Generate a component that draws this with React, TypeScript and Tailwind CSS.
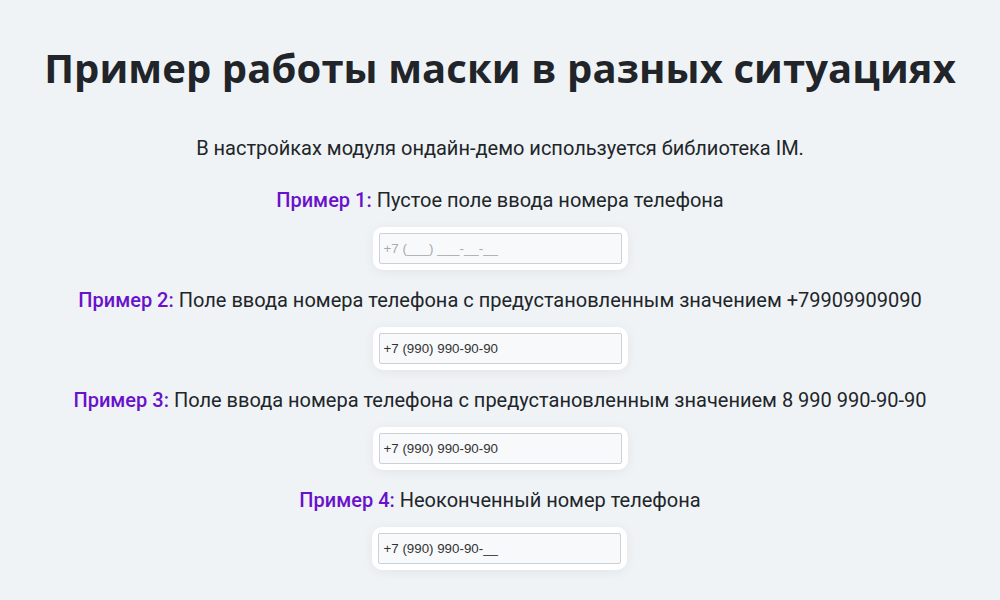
import React from 'react';

const examples = [
  { n: 1, text: 'Пустое поле ввода номера телефона', value: '', placeholder: '+7 (___) ___-__-__' },
  { n: 2, text: 'Поле ввода номера телефона с предустановленным значением +79909909090', value: '+7 (990) 990-90-90' },
  { n: 3, text: 'Поле ввода номера телефона с предустановленным значением 8 990 990-90-90', value: '+7 (990) 990-90-90' },
  { n: 4, text: 'Неоконченный номер телефона', value: '+7 (990) 990-90-__' },
];

export default function App() {
  return (
    <div className="min-h-[600px] w-full bg-[#eff3f6] flex flex-col items-center text-[#212529]">
      <h1 className="mt-[40px] text-[40px] leading-[56px] font-bold tracking-[0.1px] font-['Open_Sans',sans-serif]">
        Пример работы маски в разных ситуациях
      </h1>
      <div className="mt-[37px] flex flex-col items-center font-['Roboto',sans-serif] text-[20px] leading-[30px]">
        <p>В настройках модуля ондайн-демо используется библиотека IM.</p>
        <div className="mt-[22px] flex flex-col items-center">
          {examples.map(ex => (
            <div key={ex.n} className="flex flex-col items-center h-[100px]">
              <p>
                <span className="font-medium text-[#6a11cb]">Пример {ex.n}:</span> {ex.text}
              </p>
              <div className="mt-[12px] bg-white rounded-[10px] p-[6px] shadow-[0_2px_12px_rgba(0,0,0,0.06)]">
                <input
                  readOnly
                  value={ex.value}
                  placeholder={ex.placeholder}
                  className="block w-[243px] h-[31px] px-[4px] bg-[#f8f9fb] border border-[#ccd1d6] rounded-[2px] text-[13.33px] text-[#333] placeholder:text-[#aaa] font-['Liberation_Sans',Arial,sans-serif] outline-none"
                />
              </div>
            </div>
          ))}
        </div>
      </div>
    </div>
  );
}
